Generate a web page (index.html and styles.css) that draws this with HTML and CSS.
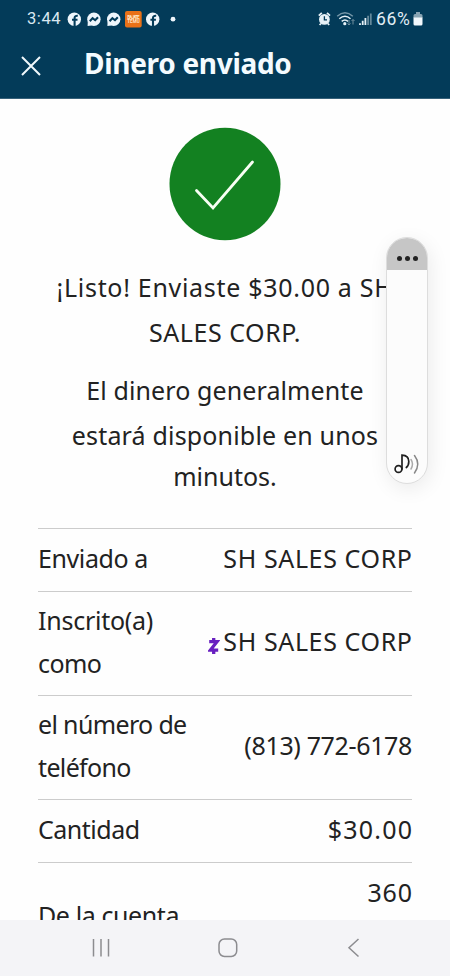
FILE: index.html
```html
<!DOCTYPE html>
<html lang="es">
<head>
<meta charset="utf-8">
<title>Dinero enviado</title>
<link rel="stylesheet" href="styles.css">
</head>
<body>
<div class="phone">
  <header class="header">
    <div class="status">
      <span class="clock">3:44</span>
      <svg class="notifications" width="110" height="18" viewBox="0 0 110 18">
        <g fill="#eef6fc">
          <circle cx="7.3" cy="9.2" r="6.7"/><circle cx="26.9" cy="9.2" r="6.7"/><circle cx="46.7" cy="9.2" r="6.7"/><circle cx="85.7" cy="9.2" r="6.7"/><circle cx="106" cy="9.2" r="2.4"/>
        </g>
        <path d="M20.8 11.5 20.6 16 24.5 15.5ZM40.6 11.5 40.4 16 44.3 15.5Z" fill="#eef6fc"/>
        <g fill="none" stroke="#033b59" stroke-width="2.1">
          <path d="M7.6 16V8Q7.6 5.6 10.8 5.8M5 9.8H10.5M86 16V8Q86 5.6 89.2 5.8M83.4 9.8H88.9"/>
          <path d="M22.8 11.2 25.6 8.1 28.2 10.2 31 7.3M42.6 11.2 45.4 8.1 48 10.2 50.8 7.3"/>
        </g>
        <rect x="58" y="1" width="16.7" height="16.5" rx="2" fill="#e87118"/>
        <text class="badge-text" x="66.4" y="8.7" text-anchor="middle" textLength="12.5">BAJATE</text>
        <text class="badge-text" x="66.4" y="13.2" text-anchor="middle" textLength="12.5">TEMU</text>
      </svg>
      <svg class="signals" width="54" height="16" viewBox="0 0 54 16">
        <circle cx="6.4" cy="8.4" r="5.4" fill="#e6f1f7"/>
        <path d="M.8 4.6 3.8 1.8M12 4.6 9 1.8M3 12.5 1.6 14M9.8 12.5 11.2 14" stroke="#e6f1f7" stroke-width="1.8"/>
        <path d="M6.4 5.3V8.8H9" fill="none" stroke="#033b59" stroke-width="1.3"/>
        <g fill="none" stroke="#e6f1f7" stroke-width="1.5">
          <path d="M19.2 5.2Q27-1.6 34.8 5.2" opacity=".5"/><path d="M21.3 7.8Q27 2.7 32.5 7.8M23.7 10.4Q27 7.5 30 10.4"/>
        </g>
        <circle cx="26.8" cy="12.7" r="1.6" fill="#e6f1f7"/>
        <path d="M31 9V14M29.5 12.5 31 14 32.5 12.5M35 13.5V8.5M33.5 10 35 8.5 36.5 10" fill="none" stroke="#71909f"/>
        <path d="M42 14V12.2M44.7 14V9.7M47.4 14V7" stroke="#e6f1f7" stroke-width="1.8"/>
        <path d="M50.1 14V4.8M52.8 14V2.5" stroke="#64899c" stroke-width="1.8"/>
      </svg>
      <span class="percent">66%</span>
      <svg class="battery" width="10" height="14" viewBox="0 0 10 14"><path d="M3 0H7V2H8Q9.5 2 9.5 3.5V6H.5V3.5Q.5 2 2 2H3Z" fill="#88a4b3"/><path d="M.5 5.5H9.5V12Q9.5 13.5 8 13.5H2Q.5 13.5.5 12Z" fill="#f2f8fc"/></svg>
    </div>
    <div class="titlebar">
      <svg width="20" height="20" viewBox="0 0 20 20"><path d="M1 1 19 19M19 1 1 19" stroke="#f0f8fc" stroke-width="2"/></svg>
      <h1>Dinero enviado</h1>
    </div>
  </header>
  <main class="content">
    <svg class="check" width="112" height="114" viewBox="0 0 112 114"><ellipse cx="56" cy="57" rx="55.5" ry="56.3" fill="#138121"/><path d="M27.5 63.5 44 81 83.5 35" fill="none" stroke="#f8fff4" stroke-width="2.8" stroke-linecap="round"/></svg>
    <p class="message">
      <span class="l1">¡Listo! Enviaste $30.00 a SH</span>
      <span class="l2">SALES CORP.</span>
    </p>
    <p class="message detail">
      <span class="l3">El dinero generalmente</span>
      <span class="l4">estará disponible en unos</span>
      <span class="l5">minutos.</span>
    </p>
    <dl class="rows">
      <div class="row"><dt>Enviado a</dt><dd class="corp">SH SALES CORP</dd></div>
      <div class="row tall"><dt class="enrolled">Inscrito(a)<br><span class="como">como</span></dt><dd class="corp"><svg class="zelle" width="12" height="18" viewBox="0 0 12 18"><path d="M1.2 4.7H9L2.4 13.1H10.2M5.7 1V4.5M5.7 13V17" fill="none" stroke="#6820c0" stroke-width="3.3"/></svg>SH SALES CORP</dd></div>
      <div class="row tall"><dt class="phone-label">el número de<br>teléfono</dt><dd class="number">(813) 772-6178</dd></div>
      <div class="row"><dt class="amount-label">Cantidad</dt><dd class="amount">$30.00</dd></div>
      <div class="row account"><dt>De la cuenta</dt><dd>360</dd></div>
    </dl>
  </main>
  <nav class="navbar">
    <svg width="20" height="20" viewBox="0 0 20 20"><path d="M2.5 1V18.5M10 1V18.5M17.5 1V18.5"/></svg>
    <svg width="20" height="20" viewBox="0 0 20 20"><rect x="1" y="1" width="17.7" height="17.5" rx="5.5"/></svg>
    <svg width="20" height="20" viewBox="0 0 20 20"><path d="M14.5 1 5 9.8 14.5 18.5"/></svg>
  </nav>
  <aside class="volume">
    <div class="volume-top"><i></i><i></i><i></i></div>
    <svg width="28" height="24" viewBox="0 0 28 24" fill="none" stroke-linecap="round"><g stroke="#202020" stroke-width="1.7"><circle cx="5.5" cy="17" r="3.4"/><path d="M9 17V3.2Q15.8 3.5 15.8 9.5Q15.8 13.5 13.3 15.5"/></g><path d="M18 7.5Q21 12 18 17" stroke="#aaa" stroke-width="1.5"/><path d="M21.5 3.5Q28 12 21.5 21" stroke="#888" stroke-width="1.5"/></svg>
  </aside>
</div>
</body>
</html>
```
FILE: styles.css
```css
* { box-sizing: border-box; }
body { margin: 0; }
.phone {
  position: relative;
  display: flex;
  flex-direction: column;
  width: 450px;
  height: 976px;
  overflow: hidden;
  background: #fefefe;
  color: #222;
  font-family: "Noto Sans", sans-serif;
}
.header { flex: none; height: 99px; background: #033b59; border-bottom: 1px solid #36617a; color: #f4fbff; }
.status { display: flex; align-items: center; height: 36px; padding: 1px 0 0 27px; font: 16.5px/36px Roboto, sans-serif; }
.clock { width: 40px; letter-spacing: .6px; color: #d9e8f1; }
.badge-text { font: bold 4.5px Roboto, sans-serif; fill: #ffe6c9; }
.signals { margin-left: 141px; }
.percent { width: 36px; margin-left: 4px; font-size: 17.5px; letter-spacing: .7px; color: #e1eef5; }
.battery { margin-left: 1px; }
.titlebar { display: flex; align-items: center; height: 60px; padding-left: 21px; }
h1 { margin: -6px 0 0 43px; font-size: 28px; line-height: 40px; font-weight: 700; letter-spacing: -.3px; white-space: nowrap; }
.content { flex: 1; min-height: 0; overflow: hidden; padding: 28px 38px 0; }
.check { display: block; margin: 0 auto 24px; position: relative; left: -.5px; }
.message { margin: 0 0 14px; font-size: 25px; line-height: 44.5px; text-align: center; white-space: nowrap; }
.message span { display: block; }
.l1 { letter-spacing: .7px; }
.l2 { letter-spacing: .55px; }
.l3 { letter-spacing: .1px; }
.l4 { letter-spacing: .17px; }
.detail { margin-bottom: 32.5px; }
.message .l5 { line-height: 38px; }
.rows { margin: 0; font-size: 25px; line-height: 43px; }
.row { display: flex; align-items: center; justify-content: space-between; height: 63px; padding-bottom: 3px; border-top: 1px solid #ccc; white-space: nowrap; }
.tall { height: 104.3px; }
.account { height: 108px; }
dt { letter-spacing: -.4px; }
.enrolled { letter-spacing: -.25px; }
.como { letter-spacing: -.6px; }
.phone-label { letter-spacing: -.65px; }
.amount-label { letter-spacing: -.5px; }
dd { margin: 0; text-align: right; }
.corp { letter-spacing: .62px; margin-right: -.6px; }
.number { letter-spacing: -.35px; }
.amount { letter-spacing: 1.2px; margin-right: -1.2px; }
.account dd { align-self: flex-start; padding-top: 8px; letter-spacing: .8px; margin-right: -.8px; }
.zelle { margin-right: 3.5px; vertical-align: -4px; }
.navbar { flex: none; display: flex; justify-content: space-between; align-items: center; height: 56px; padding: 0 86px 0 91px; background: #f4f4f7; }
.navbar svg { fill: none; stroke: #8c8c90; stroke-width: 1.5; }
.volume { position: absolute; left: 386px; top: 237px; display: flex; flex-direction: column; justify-content: space-between; align-items: center; width: 42px; height: 247px; padding-bottom: 7px; overflow: hidden; border: 1px solid #ddd; border-radius: 21px; background: #fcfcfc; box-shadow: 2px 5px 20px rgba(0,0,0,.08); }
.volume-top { display: flex; justify-content: center; align-items: center; gap: 3px; width: 100%; height: 32px; padding-top: 8px; background: #c6c6c6; }
.volume-top i { width: 5px; height: 5px; border-radius: 50%; background: #222; }
```
